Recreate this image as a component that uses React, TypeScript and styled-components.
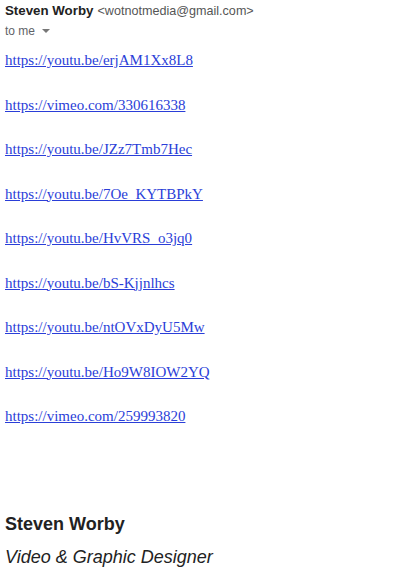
import { createGlobalStyle, styled } from "styled-components";

const GlobalStyle = createGlobalStyle`
  html, body {
    margin: 0;
    padding: 0;
    background: #ffffff;
  }
`;

const links = [
  "https://youtu.be/erjAM1Xx8L8",
  "https://vimeo.com/330616338",
  "https://youtu.be/JZz7Tmb7Hec",
  "https://youtu.be/7Oe_KYTBPkY",
  "https://youtu.be/HvVRS_o3jq0",
  "https://youtu.be/bS-Kjjnlhcs",
  "https://youtu.be/ntOVxDyU5Mw",
  "https://youtu.be/Ho9W8IOW2YQ",
  "https://vimeo.com/259993820",
];

const Mail = () => {
  return (
    <Wrapper>
      <Header>
        <FromLine>
          <Sender>Steven Worby</Sender>
          <Address>&lt;wotnotmedia@gmail.com&gt;</Address>
        </FromLine>
        <ToLine>
          to me
          <Caret />
        </ToLine>
      </Header>
      <Body>
        {links.map((link) => (
          <LinkRow key={link}>
            <a href={link}>{link}</a>
          </LinkRow>
        ))}
      </Body>
      <Signature>
        <SigName>Steven Worby</SigName>
        <SigTitle>Video &amp; Graphic Designer</SigTitle>
      </Signature>
    </Wrapper>
  );
};

export default function App() {
  return (
    <>
      <GlobalStyle />
      <Mail />
    </>
  );
}

const Wrapper = styled.div`
  width: 402px;
  padding: 2px 5px 0;
  box-sizing: border-box;
`;

const Header = styled.div`
  font-family: "Liberation Sans", Arial, sans-serif;
`;

const FromLine = styled.div`
  display: flex;
  align-items: baseline;
  gap: 4px;
  line-height: 17px;
`;

const Sender = styled.span`
  font-size: 13.3px;
  font-weight: 700;
  color: #222222;
`;

const Address = styled.span`
  font-size: 12.6px;
  color: #555555;
`;

const ToLine = styled.div`
  display: flex;
  align-items: center;
  gap: 7px;
  font-size: 12px;
  color: #5f6368;
  line-height: 22px;
`;

const Caret = styled.span`
  width: 0;
  height: 0;
  border-left: 4px solid transparent;
  border-right: 4px solid transparent;
  border-top: 4px solid #777777;
`;

const Body = styled.div`
  margin-top: 7px;
  font-family: "Liberation Serif", "Times New Roman", serif;
  font-size: 15px;
`;

const LinkRow = styled.div`
  line-height: 22px;
  margin-bottom: 22.5px;

  a {
    color: #2a3ed8;
    text-decoration: underline;
  }
`;

const Signature = styled.div`
  margin-top: 81px;
  font-family: "Liberation Sans", Arial, sans-serif;
  font-size: 18px;
  color: #222222;
`;

const SigName = styled.div`
  font-weight: 700;
  line-height: 32px;
`;

const SigTitle = styled.div`
  font-style: italic;
  line-height: 34px;
`;
